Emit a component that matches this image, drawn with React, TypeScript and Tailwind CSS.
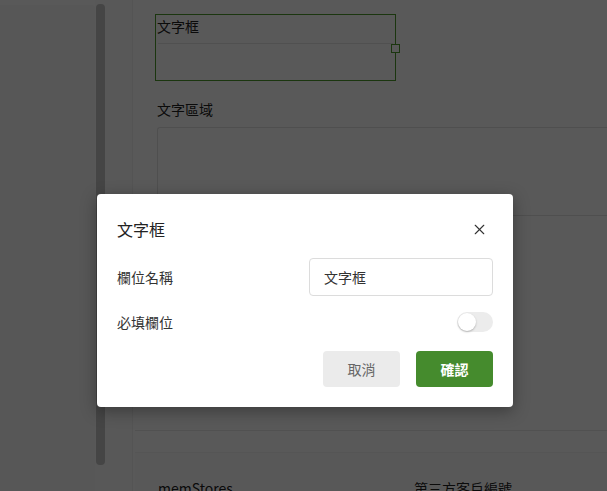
import { X } from "lucide-react"

const font = { fontFamily: '"Noto Sans CJK TC", "Noto Sans", sans-serif' }

function Canvas() {
  return (
    <div className="flex-1 flex flex-col border-l border-[#f0f0f0] bg-white">
      <div className="pl-[22px] pt-[14px] h-[430px] shrink-0 flex flex-col">
        {/* selected text field */}
        <div className="relative w-[241px] h-[67px] border border-[#4e9a2c] flex flex-col">
          <div className="h-[28px] text-[14px] leading-[22px] pl-[1px] text-[#222]">文字框</div>
          <div className="flex-1 border-t border-[#e6e6e6] mx-[2px]" />
          <div className="absolute right-[-5px] top-[29px] w-[9px] h-[9px] border border-[#4e9a2c] bg-white" />
        </div>

        <div className="mt-[18px] pl-[2px] text-[14px] leading-[20px] text-[#222]">文字區域</div>
        <div className="mt-[8px] ml-[2px] h-[89px] border-t border-b border-l border-[#e3e3e3] rounded-tl-[3px]" />
      </div>
      <div className="border-t border-[#e8e8e8] ml-[2px] h-[22px] shrink-0" />
      <div className="flex-1 min-h-0 ml-[2px] bg-[#fdfdfd] border-t border-[#f4f4f4] pl-[23px] pt-[25px] flex text-[14px] text-[#222]">
        <span className="w-[256px]">memStores</span>
        <span>第三方客戶編號</span>
      </div>
    </div>
  )
}

function Dialog() {
  return (
    <div className="absolute left-[97px] top-[194px] w-[416px] bg-white rounded-[4px] shadow-[0_4px_16px_rgba(0,0,0,0.35)] px-5 pt-5 pb-5">
      <div className="h-[30px] flex items-center justify-between">
        <span className="text-[16px] text-[#222]">文字框</span>
        <X className="w-[17px] h-[17px] text-[#333] mr-[5px]" strokeWidth={1.6} />
      </div>
      <div className="mt-[14px] h-[38px] flex items-center justify-between">
        <span className="text-[14px] text-[#333]">欄位名稱</span>
        <div className="w-[184px] h-[38px] border border-[#dcdcdc] rounded-[4px] flex items-center px-[14px] text-[14px] text-[#333]">
          文字框
        </div>
      </div>
      <div className="mt-[7px] h-[38px] flex items-center justify-between">
        <span className="text-[14px] text-[#333]">必填欄位</span>
        <div className="w-[36px] h-[20px] rounded-full bg-[#ececec] relative">
          <div className="absolute left-[1px] top-[1px] w-[18px] h-[18px] rounded-full bg-white shadow-[0_1px_2px_rgba(0,0,0,0.25)]" />
        </div>
      </div>
      <div className="mt-[10px] flex justify-end gap-4">
        <button className="w-[77px] h-[36px] rounded-[4px] bg-[#ebebeb] text-[14px] text-[#666]">取消</button>
        <button className="w-[77px] h-[36px] rounded-[4px] bg-[#458b2d] text-[14px] font-bold text-white">確認</button>
      </div>
    </div>
  )
}

export default function App() {
  return (
    <div className="relative w-[607px] h-[491px] overflow-hidden bg-white" style={font}>
      <div className="flex h-full">
        <div className="w-[95px] pt-[5px] bg-white">
          <div className="h-full bg-[#f9f9f9] rounded-tr-[4px]" />
        </div>
        <div className="w-[11px] pt-[4px] flex justify-center bg-[#fbfbfb]">
          <div className="w-[9px] h-[461px] rounded-[4px] bg-[#c6c6c6]" />
        </div>
        <div className="w-[26px] bg-[#fcfcfc]" />
        <Canvas />
      </div>
      <div className="absolute inset-0 bg-black/65" />
      <Dialog />
    </div>
  )
}
